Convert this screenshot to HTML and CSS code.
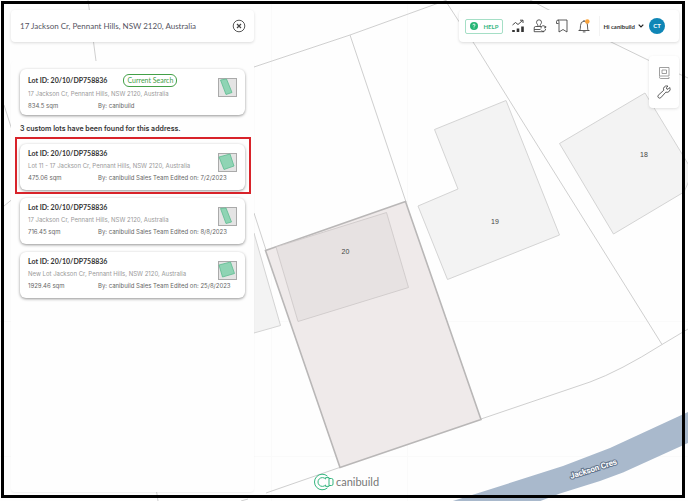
FILE: index.html
```html
<!DOCTYPE html>
<html lang="en">
<head>
<meta charset="utf-8">
<title>canibuild</title>
<link rel="stylesheet" href="styles.css">
</head>
<body>
<div class="app">
  <svg class="map" viewBox="0 0 688 501" preserveAspectRatio="xMidYMid slice" role="img" aria-label="Lot map">
    <rect width="688" height="501" fill="#fefefe"/>
    <g class="tile-lines">
      <path d="M271.500 0V501M407.500 0V501M0 321.500H688M0 456.500H688"/>
    </g>
    <path fill="#a9b9cc" d="M440 505L480 492.500 563 466 610 448 688 412V443L623 472.500 600 481 560 493.500 530 505Z"/>
    <g class="boundaries">
      <path d="M254 67L350 35 447 0"/>
      <path d="M350 35L406 202"/>
      <path d="M445 0L458 20 475 45 521 119 628 290 662 344.500"/>
      <path d="M530 0L549 10 611 42 648 60 688 78"/>
      <path d="M254 213L266 250"/>
      <path d="M266 493L341 467M481 419L590 382Q620 371 662 344.500L688 329"/>
      <path d="M88 0L96 61M4 105L12 130M4 206L20 193M156 488L158 501M241 501L248 499"/>
    </g>
    <g class="buildings">
      <path d="M434.500 129.500L506 100.500 559.500 235 447.500 279.500 418 206 458 189Z"/>
      <path d="M559.500 143.500L645 93 693 172 684 192 613.500 234Z"/>
      <path d="M254 233L280.500 325.500 254 333 240 333V233Z"/>
    </g>
    <path fill="#efeaea" stroke="#b9b7b7" stroke-width="1.600" d="M265.500 250.500L405.500 201.500 481 419.500 340 467.500Z"/>
    <path fill="#e7e2e2" stroke="#cbc7c7" stroke-width="0.800" d="M276 247L386.500 212.500 408.500 287.500 298 321.500Z"/>
    <g class="lot-numbers">
      <text x="345.500" y="254">20</text>
      <text x="495" y="223.500">19</text>
      <text x="644" y="157">18</text>
    </g>
    <text class="road-name" transform="translate(571 479) rotate(-18)">Jackson Cres</text>
  </svg>

  <div class="window">
    <div class="side">
      <form class="search">
        <input type="text" aria-label="Address" value="17 Jackson Cr, Pennant Hills, NSW 2120, Australia">
        <button type="reset" class="clear" aria-label="Clear">
          <svg viewBox="0 0 14 14"><circle cx="7" cy="7" r="5.800"/><path d="M5 5l4 4M9 5l-4 4" stroke-width="1.200"/></svg>
        </button>
      </form>

      <section class="results">
        <article class="lot">
          <div class="lot-text">
            <h2>Lot ID: 20/10/DP758836 <span class="tag">Current Search</span></h2>
            <p class="address">17 Jackson Cr, Pennant Hills, NSW 2120, Australia</p>
            <p class="meta"><span>834.5 sqm</span><span>By: canibuild</span></p>
          </div>
          <svg class="thumb" viewBox="0 0 19 19"><rect x=".5" y=".5" width="18" height="18"/><path d="M2.500 2L8.500 1 14 14.500 8 16.500Z"/></svg>
        </article>

        <p class="found">3 custom lots have been found for this address.</p>

        <article class="lot selected">
          <div class="lot-text">
            <h2>Lot ID: 20/10/DP758836</h2>
            <p class="address">Lot 11 - 17 Jackson Cr, Pennant Hills, NSW 2120, Australia</p>
            <p class="meta"><span>475.06 sqm</span><span>By: canibuild Sales Team Edited on: 7/2/2023</span></p>
          </div>
          <svg class="thumb" viewBox="0 0 19 19"><rect x=".5" y=".5" width="18" height="18"/><path d="M1 4L12 1 16 13 6 16.500Z"/></svg>
        </article>

        <article class="lot">
          <div class="lot-text">
            <h2>Lot ID: 20/10/DP758836</h2>
            <p class="address">17 Jackson Cr, Pennant Hills, NSW 2120, Australia</p>
            <p class="meta"><span>716.45 sqm</span><span>By: canibuild Sales Team Edited on: 8/8/2023</span></p>
          </div>
          <svg class="thumb" viewBox="0 0 19 19"><rect x=".5" y=".5" width="18" height="18"/><path d="M2.500 1.500L8 1 13.500 15 8 16.500Z"/></svg>
        </article>

        <article class="lot">
          <div class="lot-text">
            <h2>Lot ID: 20/10/DP758836</h2>
            <p class="address">New Lot Jackson Cr, Pennant Hills, NSW 2120, Australia</p>
            <p class="meta"><span>1929.46 sqm</span><span>By: canibuild Sales Team Edited on: 25/8/2023</span></p>
          </div>
          <svg class="thumb" viewBox="0 0 19 19"><rect x=".5" y=".5" width="18" height="18"/><path d="M1 4L12.500 1 16.500 12.500 4.500 16Z"/></svg>
        </article>
      </section>
    </div>

    <div class="right">
      <nav class="toolbar">
        <button class="help"><svg viewBox="0 0 8 8"><circle cx="4" cy="4" r="4" fill="#26b574"/><path d="M2.900 3.200Q3 2 4 2T5.100 3.100Q5.100 3.700 4.400 4T4 4.800M4 5.600V6.300" fill="none" stroke="#fff" stroke-width=".9"/></svg>HELP</button>
        <button class="icon" aria-label="Reports"><svg viewBox="0 0 14 14"><path d="M1.500 6L4.500 3.500 7 5.500 11.500 1.500M9 1.200H12V4" stroke-width="0.900"/><path d="M2.500 13V11M7 13V9.500M11.500 13V7.500" stroke-width="2.600"/></svg></button>
        <button class="icon" aria-label="Approvals"><svg viewBox="0 0 14 14"><path d="M4.800 7.500C5.500 5.500 3.500 5 3.500 3.300A2.500 2.500 0 0 1 8.500 3.300C8.500 5 6.500 5.500 7.200 7.500M8 7.500H2.500Q1.200 7.500 1.200 9V10.500H7.500M1.200 12.700H11M1.200 10.500V12.700M8 9.500A2.300 2.300 0 0 1 12.500 8.500M12.700 7V8.800H11M12.600 10A2.300 2.300 0 0 1 8.500 11.500"/></svg></button>
        <button class="icon" aria-label="Saved"><svg viewBox="0 0 14 14"><path d="M3.500 4.500H1.500V2.800Q1.500 1 3.200 1H12V13L8 10.500 4 13V3Q4 1 3 1"/></svg></button>
        <button class="icon" aria-label="Notifications"><svg viewBox="0 0 14 14"><path d="M1.500 11.500H12.500M2.800 11.500Q3.500 10 3.500 6.500Q3.500 2.500 7 2.200Q10.500 2.500 10.500 7T11.500 11.500M5.800 12.900H8.500M7 2V1"/><circle cx="10.300" cy="2.500" r="2.300" fill="#f9a33c" stroke="none"/></svg></button>
        <div class="account">
          <button class="user">Hi canibuild <svg viewBox="0 0 6 4"><path d="M.7.700L3 3 5.300.700"/></svg></button>
          <span class="avatar">CT</span>
        </div>
      </nav>
      <div class="tools">
        <button class="icon" aria-label="Plans"><svg class="plans" viewBox="0 0 14 14"><path d="M2.500 10V1.500H12V10H3.500Q2.500 10 2.500 11.200T3.500 12.500H12V11M5 4H9.500V7.500H5Z"/></svg></button>
        <button class="icon" aria-label="Settings"><svg viewBox="0 0 14 14"><path d="M12.700 2.500L11 4.300 9.700 3.900 9.400 2.700 11 1.100Q8.500.300 7.200 2T6.800 5.200L1.200 10.300Q.400 11.600 1.400 12.600T3.700 12.800L8.800 7.200Q11 7.800 12.400 6.200T12.700 2.500Z"/></svg></button>
      </div>
    </div>

    <div class="brand">
      <svg viewBox="0 0 22 18"><path d="M14.500 3.200A7.800 7.800 0 1 0 14.500 14.800M12.600 6A4.400 4.400 0 1 0 12.600 12M12.600 6V4.600H16V13.400H12.600V12M16 5.500H18.500Q20 5.500 20 7V11Q20 12.500 18.500 12.500H16"/></svg>
      <span>canibuild</span>
    </div>
  </div>
</div>
</body>
</html>
```
FILE: styles.css
```css
* { box-sizing: border-box; }
body {
  margin: 0;
  font-family: Lato, "Liberation Sans", sans-serif;
  color: #333;
}
h2, p { margin: 0; }
button { border: 0; padding: 0; background: none; font: inherit; color: inherit; }
svg { display: block; }

.app { position: relative; min-height: 100vh; padding: 1px 3px 3px 1px; display: flex; background: #fefefe; }
.map { position: absolute; inset: 0; width: 100%; height: 100%; }
.map path { vector-effect: non-scaling-stroke; }
.tile-lines path { fill: none; stroke: #fafafa; }
.boundaries path { fill: none; stroke: #cfcfcf; }
.buildings path { fill: #f3f3f3; stroke: #d4d4d4; }
.lot-numbers { font: 7px "Liberation Sans", sans-serif; fill: #444; text-anchor: middle; }
.road-name { font: bold 8px Roboto, sans-serif; fill: #fff; stroke: #63758c; stroke-width: 2px; paint-order: stroke; }

.window {
  position: relative;
  flex: 1;
  display: flex;
  justify-content: space-between;
  border: 3px solid #000;
  padding: 6px 3px 3px 7px;
}

.side { width: 243px; display: flex; flex-direction: column; gap: 19px; }
.search {
  display: flex;
  align-items: center;
  height: 32px;
  padding: 0 8px 0 9px;
  background: #fff;
  border-radius: 4px;
  box-shadow: 0 1px 3px rgba(0, 0, 0, .14);
}
.search input {
  flex: 1;
  min-width: 0;
  border: 0;
  padding: 0;
  background: none;
  font: 8px Lato, sans-serif;
  color: #55555f;
  outline: 0;
}
.clear svg { width: 14px; height: 14px; fill: none; stroke: #444; stroke-width: .9px; }

.results {
  flex: 1;
  padding: 8px 9px;
  background: #fefefe;
  border-radius: 4px;
  box-shadow: 0 1px 2px rgba(0, 0, 0, .06);
}
.lot {
  position: relative;
  display: flex;
  height: 46px;
  margin-bottom: 8px;
  padding: 4px 8px;
  background: #fff;
  border-radius: 6px;
  box-shadow: 0 1px 3px rgba(0, 0, 0, .42);
}
.lot-text { flex: 1; min-width: 0; }
.lot h2 { display: flex; align-items: center; gap: 16px; font-size: 7px; line-height: 11px; font-weight: 700; white-space: nowrap; }
.tag {
  margin-top: 1px;
  padding: 0 3px;
  border: 1px solid #43a047;
  border-radius: 6px;
  font-weight: 400;
  color: #43a047;
}
.address, .meta { font-family: Inter, sans-serif; font-size: 6px; line-height: 12px; white-space: nowrap; }
.address { color: #999; line-height: 13px; }
.meta { display: grid; grid-template-columns: 70px auto; color: #666; }
.thumb { flex: none; width: 19px; height: 19px; margin-top: 5px; }
.thumb rect { fill: #e4e4e4; stroke: #aaa; }
.thumb path { fill: #8fd4b4; stroke: #5dbb90; stroke-width: .8px; }
.found { margin: 8px 0 9px; font-family: Inter, sans-serif; font-size: 7px; line-height: 12px; font-weight: 600; }
.selected::after { content: ""; position: absolute; inset: -7px -6px -4px -5px; border: 2px solid #d8232a; }

.brand {
  position: absolute;
  left: 6px;
  right: 0;
  bottom: 4px;
  display: flex;
  align-items: center;
  justify-content: center;
  gap: 1px;
  font-size: 11px;
  line-height: 18px;
  color: #777;
  pointer-events: none;
}
.brand svg { width: 22px; height: 18px; fill: none; stroke: #35b67f; stroke-width: 1px; }

.right { display: flex; flex-direction: column; align-items: flex-end; gap: 14px; }
.toolbar {
  display: flex;
  align-items: center;
  height: 32px;
  padding: 0 14px 0 6px;
  gap: 8px;
  background: #fff;
  border-radius: 4px;
  box-shadow: 0 1px 3px rgba(0, 0, 0, .14);
}
.help {
  display: flex;
  align-items: center;
  gap: 5px;
  height: 15px;
  padding: 0 4px;
  border: 1px solid #a5dfc6;
  border-radius: 2px;
  font-size: 6px;
  font-weight: 700;
  color: #35b67f;
}
.help svg { width: 8px; height: 8px; }
.icon svg { width: 14px; height: 14px; fill: none; stroke: #333; stroke-width: .8px; }
.icon .plans { stroke: #888; }
.account { display: flex; align-items: center; gap: 5px; height: 20px; padding-left: 3px; border-left: 1px solid #f3f3f3; }
.user { display: flex; align-items: center; gap: 3px; font-size: 6px; font-weight: 700; }
.user svg { width: 6px; height: 4px; fill: none; stroke: #222; stroke-width: 1.2px; }
.avatar { width: 16px; border-radius: 50%; background: #0f86b6; color: #fff; font-size: 6px; font-weight: 700; line-height: 16px; text-align: center; }
.tools {
  display: flex;
  flex-direction: column;
  gap: 5px;
  padding: 10px 8px 9px;
  background: #fff;
  border-radius: 4px;
  box-shadow: 0 1px 3px rgba(0, 0, 0, .12);
}
```
